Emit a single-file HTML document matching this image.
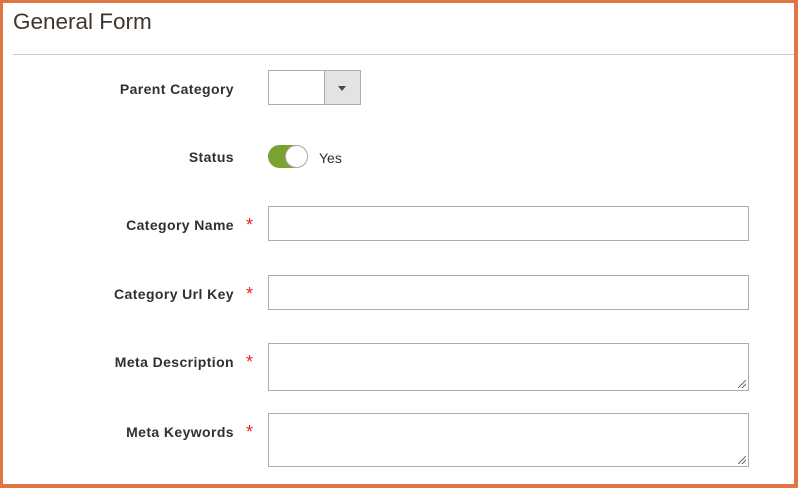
<!DOCTYPE html>
<html><head><style>
body{margin:0;width:798px;height:488px;overflow:hidden;background:#fff;font-family:"Liberation Sans",sans-serif;}
.frame{position:absolute;left:0;top:0;width:798px;height:488px;box-sizing:border-box;border:solid #e07444;border-width:3px 4px 4px 3px;}
.title{position:absolute;left:13px;top:9px;font-size:22.5px;color:#41362f;}
.hr{position:absolute;left:13px;right:4px;top:54px;height:1px;background:#ccc;}
.lbl{position:absolute;right:564px;font-size:14px;font-weight:bold;color:#303030;letter-spacing:0.4px;}
.star{position:absolute;left:246px;color:#e22626;font-size:18px;}
.in{position:absolute;left:268px;width:481px;box-sizing:border-box;border:1px solid #adadad;background:#fff;}
.grip{position:absolute;right:2px;bottom:2px;width:8px;height:8px;background:linear-gradient(135deg,transparent 45%,#7a6a60 45%,#7a6a60 55%,transparent 55%,transparent 70%,#7a6a60 70%,#7a6a60 80%,transparent 80%);}
</style></head><body>
<div class="frame"></div>
<div class="title">General Form</div>
<div class="hr"></div>

<div class="lbl" style="top:81px">Parent Category</div>
<div style="position:absolute;left:268px;top:70px;width:93px;height:35px;box-sizing:border-box;border:1px solid #adadad;">
 <div style="position:absolute;left:55px;top:0;width:36px;height:33px;box-sizing:border-box;background:#e3e3e3;border-left:1px solid #adadad;"></div>
 <div style="position:absolute;left:69px;top:15px;width:0;height:0;border-left:4px solid transparent;border-right:4px solid transparent;border-top:5px solid #514943;"></div>
</div>

<div class="lbl" style="top:149px">Status</div>
<div style="position:absolute;left:268px;top:145px;width:40px;height:23px;border-radius:12px;background:#79a22e;"></div>
<div style="position:absolute;left:285px;top:145px;width:21px;height:21px;border-radius:50%;background:#fff;border:1px solid #adadad;"></div>
<div style="position:absolute;left:319px;top:150px;font-size:14px;color:#303030;">Yes</div>

<div class="lbl" style="top:217px">Category Name</div><div class="star" style="top:215px">*</div>
<div class="in" style="top:206px;height:35px"></div>

<div class="lbl" style="top:286px">Category Url Key</div><div class="star" style="top:284px">*</div>
<div class="in" style="top:275px;height:35px"></div>

<div class="lbl" style="top:354px">Meta Description</div><div class="star" style="top:352px">*</div>
<div class="in" style="top:343px;height:48px"><div class="grip"></div></div>

<div class="lbl" style="top:424px">Meta Keywords</div><div class="star" style="top:422px">*</div>
<div class="in" style="top:413px;height:54px"><div class="grip"></div></div>
</body></html>
